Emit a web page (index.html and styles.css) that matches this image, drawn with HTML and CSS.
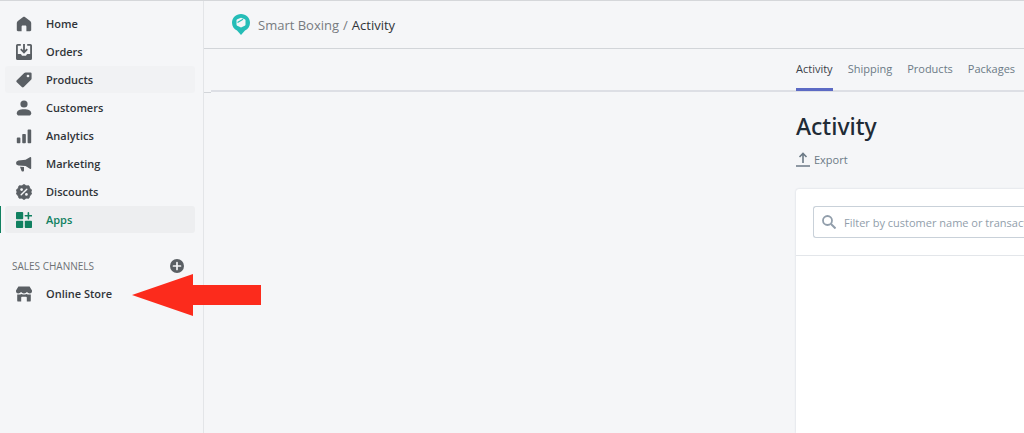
FILE: index.html
```
<!DOCTYPE html>
<html lang="en">
<head>
  <meta charset="UTF-8">
  <meta name="viewport" content="width=device-width, initial-scale=1.0">
  <title>Smart Boxing / Activity</title>
  <link rel="stylesheet" href="styles.css">
</head>
<body>
  <div class="layout">
    <nav class="sidebar">
      <ul class="nav-list">
        <li><a href="#"><svg viewBox="0 0 20 20"><path d="M8.9 1.3 2.3 6.2C1.4 6.900 1 7.700 1 8.700V17.500C1 18.400 1.600 19 2.500 19H7V13.500C7 12.600 7.600 12 8.500 12H11.500C12.400 12 13 12.600 13 13.500V19H17.500C18.400 19 19 18.400 19 17.500V8.700C19 7.700 18.600 6.900 17.700 6.200L11.100 1.300C10.400.8 9.600.8 8.900 1.300Z"/></svg>Home</a></li>
        <li><a href="#"><svg viewBox="0 0 20 20"><path d="M6 0H2Q0 0 0 2V18Q0 20 2 20H18Q20 20 20 18V2Q20 0 18 0H14V2.300H17.700V12.500H14.500Q13.600 12.500 13.200 13.300L12.500 14.700H7.500L6.800 13.300Q6.400 12.500 5.500 12.500H2.300V2.300H6Z"/><path d="M10 0V10M6 6.500l4 4 4-4" fill="none" stroke="currentColor" stroke-width="2.300"/></svg>Orders</a></li>
        <li><a href="#" class="hovered"><svg viewBox="0 0 20 20"><path fill-rule="evenodd" d="M10.300 1.200Q11 .5 12 .5H18Q19.500.5 19.500 2V8Q19.500 9 18.800 9.700L9.700 18.800Q8.500 20 7.300 18.800L1 12.700Q-.2 11.500 1 10.300ZM15 3.300A1.700 1.700 0 1 0 15 6.700 1.700 1.700 0 0 0 15 3.300Z"/></svg>Products</a></li>
        <li><a href="#"><svg viewBox="0 0 20 20"><circle cx="10" cy="5" r="4.500"/><path d="M1 16.500C1 13 4.500 11.500 10 11.500S19 13 19 16.500C19 18.500 17.800 19.500 16 19.500H4C2.200 19.500 1 18.500 1 16.500Z"/></svg>Customers</a></li>
        <li><a href="#"><svg viewBox="0 0 20 20"><rect x="1" y="12" width="4.500" height="7" rx="1"/><rect x="7.800" y="7.500" width="4.500" height="11.500" rx="1"/><rect x="14.500" y="2" width="4.500" height="17" rx="1"/></svg>Analytics</a></li>
        <li><a href="#"><svg viewBox="0 0 20 20"><path d="M17.300 1.500Q19 .5 19 2.500V15Q19 17 17.300 16L12 12.600 3 12Q0 11.500 0 8.800T3 5.500L12 4.800ZM5 13.500 10 13.900V18Q10 19.300 8.800 19.300H8Q7 19.300 6.800 18.300Z"/></svg>Marketing</a></li>
        <li><a href="#"><svg viewBox="0 0 20 20"><path d="M10 .5 12.800 2.300 16.200 2.300 17.300 5.300 19.500 7.500 18.700 10 19.500 12.500 17.300 14.700 16.200 17.700 12.800 17.700 10 19.500 7.200 17.700 3.800 17.700 2.700 14.700 .5 12.500 1.300 10 .5 7.500 2.700 5.300 3.800 2.300 7.200 2.300Z" stroke="currentColor" stroke-linejoin="round"/><path d="m6.500 13.500 7-7" stroke="#f5f6f8" stroke-width="1.800" stroke-linecap="round"/><circle cx="7" cy="7" r="1.700" fill="#f5f6f8"/><circle cx="13" cy="13" r="1.700" fill="#f5f6f8"/></svg>Discounts</a></li>
        <li><a href="#" class="active"><svg viewBox="0 0 20 20"><rect width="9" height="9" rx="1"/><rect y="11" width="9" height="9" rx="1"/><rect x="11" y="11" width="9" height="9" rx="1"/><path d="M15.500 1V8.500M11.700 4.700H19.300" stroke="currentColor" stroke-width="2" stroke-linecap="round"/></svg>Apps</a></li>
      </ul>
      <div class="section-head">
        <h2>SALES CHANNELS</h2>
        <button type="button" aria-label="Add sales channel"><svg viewBox="0 0 20 20"><circle cx="10" cy="10" r="10"/><path d="M10 5V15M5 10H15" stroke="#f5f6f8" stroke-width="2.400" stroke-linecap="round"/></svg></button>
      </div>
      <ul class="nav-list">
        <li><a href="#"><svg viewBox="0 0 20 20"><path d="M3 .5H17L20 5.500V7Q19.800 9.300 17.200 9.300 15 9.300 13.700 7.500 12.300 9.300 10 9.300T6.300 7.500Q5 9.300 2.800 9.300.2 9.300 0 7V5.500Z"/><path d="M1.500 10.500H5Q6.500 10.200 7 9.900 10 11.500 13 9.900 13.500 10.200 15 10.500H18.500V18Q18.500 19.500 17 19.500H13.500V14.500Q13.500 13.500 12.500 13.500H7.500Q6.500 13.500 6.500 14.500V19.500H3Q1.500 19.500 1.500 18Z"/></svg>Online Store</a></li>
      </ul>
      <svg class="pointer-arrow" viewBox="0 0 129 43"><path d="M0 21 61 0V11H129V31H61V42Z"/></svg>
    </nav>

    <main class="main">
      <header class="topbar">
        <svg class="logo" viewBox="0 0 18 21"><path d="M9 0C14 0 18 3.700 18 8.700 18 12.500 16 15 13 16.500L9 21 5 16.500C2 15 0 12.500 0 8.700 0 3.700 4 0 9 0Z" fill="#25bdb7"/><path d="M4.500 6.500Q4.500 5.700 5.300 5.300L9 3.800 12.700 5.300Q13.500 5.700 13.500 6.500V10.500Q13.500 11.300 12.700 11.700L9 13.500 5.300 11.700Q4.500 11.300 4.500 10.500Z" fill="#f5f6f8"/><path d="M5.500 8.500 11 5.300" stroke="#25bdb7" stroke-width="1.300" fill="none"/></svg>
        <a href="#">Smart Boxing</a>
        <span class="slash">/</span>
        <span>Activity</span>
      </header>
      <div class="app">
        <nav class="tabs">
          <a href="#" class="current">Activity</a>
          <a href="#">Shipping</a>
          <a href="#">Products</a>
          <a href="#">Packages</a>
        </nav>
        <section class="page">
          <h1>Activity</h1>
          <button type="button" class="export"><svg viewBox="0 0 14 15"><path d="M7 11V2M3.500 5 7 1.500 10.500 5M0 14H14" fill="none" stroke="currentColor" stroke-width="1.600"/></svg>Export</button>
          <div class="card">
            <div class="filter">
              <label class="search">
                <svg viewBox="0 0 14 14"><circle cx="5.500" cy="5.500" r="4.500" fill="none" stroke="currentColor" stroke-width="1.800"/><path d="m9 9 4.500 4.500" stroke="currentColor" stroke-width="2"/></svg>
                <input type="text" aria-label="Filter activity" placeholder="Filter by customer name or transaction">
              </label>
            </div>
          </div>
        </section>
      </div>
    </main>
  </div>
</body>
</html>
```
FILE: styles.css
```
* {
  box-sizing: border-box;
}
body {
  margin: 0;
  font-family: "Open Sans", "Noto Sans", sans-serif;
  font-size: 11px;
  color: #303439;
  background: #f5f6f8;
  overflow: hidden;
}
a { color: inherit; text-decoration: none; }
svg { flex: none; fill: currentColor; }
button {
  padding: 0;
  border: none;
  background: none;
  font: inherit;
  cursor: pointer;
}
.layout {
  display: grid;
  grid-template-columns: 204px minmax(0, 1fr);
  min-height: 100vh;
  border-top: 1px solid #d5d7da;
}

/* Sidebar */
.sidebar {
  position: relative;
  padding-top: 9px;
  border-right: 1px solid #e3e5e8;
}
.nav-list {
  display: grid;
  gap: 1px;
  margin: 0;
  padding: 0 8px 0 5px;
  list-style: none;
}
.nav-list a {
  position: relative;
  display: flex;
  align-items: center;
  gap: 14px;
  height: 27px;
  padding-left: 11px;
  border-radius: 3px;
  font-weight: 600;
}
.nav-list svg { width: 16px; height: 16px; color: #5a5f64; }
.nav-list .hovered { background: #f1f2f4; }
.nav-list .active { background: #edeef0; color: #108060; }
.nav-list .active svg { color: #108060; }
.nav-list .active::before {
  content: "";
  position: absolute;
  left: -5px;
  width: 1px;
  height: 100%;
  background: #108060;
}
.section-head {
  display: flex;
  align-items: center;
  justify-content: space-between;
  height: 28px;
  margin-top: 19px;
  padding: 0 19px 0 12px;
  color: #6d7175;
}
.section-head h2 {
  margin: 0;
  font-size: 10px;
  font-weight: 400;
}
.section-head button { color: #5a5f64; }
.section-head svg { display: block; width: 14px; height: 14px; }
.pointer-arrow {
  position: absolute;
  z-index: 1;
  top: 273px;
  left: 132px;
  width: 129px;
  height: 43px;
  fill: #fc2b1c;
}

/* Top bar */
.topbar {
  display: flex;
  align-items: center;
  gap: 4px;
  height: 48px;
  padding-left: 28px;
  border-bottom: 1px solid #d2d5d9;
  font-size: 13px;
}
.topbar a, .topbar .slash { color: #777b80; }
.logo { width: 18px; height: 21px; margin-right: 4px; }

/* App frame */
.tabs {
  position: relative;
  display: flex;
  gap: 15px;
  height: 43px;
  margin-left: 7px;
  padding-left: calc(100% - 235px);
  border-bottom: 2px solid #dddfe5;
  color: #6c7a86;
}
/* edge of the frame, left of the tab bar */
.tabs::before {
  content: "";
  position: absolute;
  bottom: -3px;
  left: -7px;
  width: 7px;
  height: 1px;
  background: #d2d5d9;
}
.tabs a {
  height: 42px;
  line-height: 40px;
}
.tabs .current {
  border-bottom: 3px solid #5c6ac4;
  color: #3b4249;
}
.page {
  display: grid;
  grid-template-columns: 228px;
  justify-content: end;
}
h1 {
  margin: 18px 0 0;
  font-family: "Noto Sans", "Open Sans", sans-serif;
  font-size: 23px;
  font-weight: 500;
  line-height: 32px;
  color: #212b36;
}
.export {
  display: flex;
  align-items: center;
  gap: 4px;
  height: 18px;
  margin-top: 8px;
  color: #6c7a86;
}
.export svg { width: 14px; height: 15px; }
.card {
  min-height: calc(100vh - 189px);
  margin-top: 21px;
  border-radius: 3px 0 0 0;
  background: #fff;
  box-shadow: 0 0 2px #c9cfd6;
}
.filter {
  padding: 17px 0 17px 17px;
  border-bottom: 1px solid #e3e6ea;
}
.search {
  display: flex;
  align-items: center;
  gap: 8px;
  height: 32px;
  padding-left: 8px;
  border: 1px solid #c9d1d9;
  border-right: none;
  border-radius: 3px 0 0 3px;
  color: #919eab;
}
.search svg { width: 14px; height: 14px; }
.search input {
  flex: 1;
  min-width: 0;
  padding: 0;
  border: none;
  outline: none;
  background: none;
  font: inherit;
}
.search input::placeholder { color: #919eab; }
```
